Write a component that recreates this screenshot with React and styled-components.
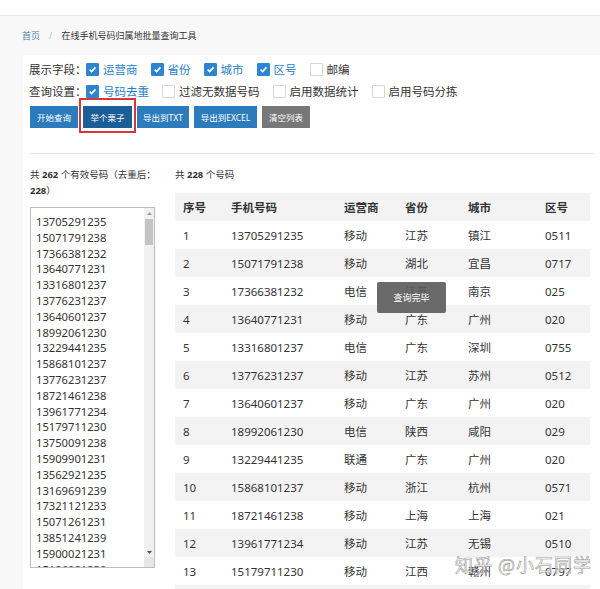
import styled, { createGlobalStyle } from "styled-components";

const GlobalStyle = createGlobalStyle`
    body {
        margin: 0;
        background: #f8f8f8;
        font-family: "Noto Sans", "Noto Sans CJK SC", sans-serif;
        color: #333;
        overflow: hidden;
    }
`;

const Page = styled.div`
    width: 600px;
    height: 589px;
    overflow: hidden;
    position: relative;
`;

const TopBar = styled.div`
    height: 15px;
    background: #fff;
    border-bottom: 1px solid #e8e8e8;
`;

const Breadcrumb = styled.div`
    display: flex;
    align-items: center;
    gap: 7px;
    padding: 9px 22px 0;
    height: 30px;
    box-sizing: border-box;
    font-size: 9px;
    line-height: 14px;
    margin-bottom: 9px;
`;

const Crumb = styled.span`
    color: ${(props) => (props.link ? "#4d7fb3" : "#333")};
`;

const Sep = styled.span`
    color: #bbb;
    margin: 0 2px;
`;

const Card = styled.div`
    margin-left: 23px;
    background: #fff;
    padding: 3px 6px 0 6px;
    height: 560px;
`;

const OptionRow = styled.div`
    display: flex;
    align-items: center;
    height: 22px;
    font-size: 11.5px;
    white-space: nowrap;
`;

const RowLabel = styled.span`
    width: 57px;
    flex-shrink: 0;
    color: #333;
`;

const Option = styled.label`
    display: flex;
    align-items: center;
    gap: 4px;
    margin-right: 13px;
    color: ${(props) => (props.checked ? "#2a7fc9" : "#333")};
`;

const Box = styled.span`
    width: 13px;
    height: 13px;
    box-sizing: border-box;
    border-radius: 1px;
    display: flex;
    align-items: center;
    justify-content: center;
    background: ${(props) => (props.checked ? "#2d85d1" : "#fff")};
    border: 1px solid ${(props) => (props.checked ? "#2d85d1" : "#d6d6d6")};
`;

const ButtonRow = styled.div`
    display: flex;
    gap: 5px;
    margin-top: 4px;
    margin-left: 1px;
`;

const Button = styled.div`
    width: ${(props) => props.w}px;
    height: 22px;
    display: flex;
    align-items: center;
    justify-content: center;
    font-size: 8.5px;
    color: #fff;
    background: ${(props) => props.bg || "#2b7bbd"};
`;

const Highlight = styled.div`
    position: relative;
    &::after {
        content: "";
        position: absolute;
        left: -4px;
        right: -4px;
        top: -8px;
        bottom: -5px;
        border: 2px solid #d3383c;
    }
`;

const Divider = styled.div`
    margin: 25px 0 0 1px;
    height: 1px;
    background: #e6e6e6;
`;

const Body = styled.div`
    display: flex;
    gap: 15px;
    padding-left: 1px;
`;

const LeftCol = styled.div`
    width: 130px;
    flex-shrink: 0;
`;

const Summary = styled.div`
    font-size: 9.5px;
    line-height: 16px;
    margin-top: 13px;
    color: #333;
    b {
        font-weight: 700;
    }
`;

const TextBox = styled.div`
    margin-top: 8px;
    width: 125px;
    height: 361px;
    border: 1px solid #bdbdbd;
    box-sizing: border-box;
    display: flex;
    overflow: hidden;
`;

const Lines = styled.div`
    flex: 1;
    padding: 6px 0 0 5px;
    font-size: 11.2px;
    line-height: 15.8px;
    color: #333;
    overflow: hidden;
`;

const ScrollBar = styled.div`
    width: 10px;
    background: #f0f0f0;
    display: flex;
    flex-direction: column;
    align-items: center;
`;

const Arrow = styled.div`
    height: 10px;
    display: flex;
    align-items: center;
    justify-content: center;
`;

const Track = styled.div`
    flex: 1;
    width: 100%;
    padding-top: 1px;
`;

const Thumb = styled.div`
    height: 26px;
    margin: 0 1px;
    background: #c3c3c3;
`;

const Grip = styled.div`
    height: 10px;
    width: 100%;
    background: #e6e6e6;
`;

const RightCol = styled.div`
    flex: 1;
    margin-right: 4px;
    position: relative;
`;

const Table = styled.table`
    margin-top: 10px;
    width: 415px;
    border-collapse: collapse;
    table-layout: fixed;
    font-size: 11.5px;
    color: #333;
`;

const Th = styled.th`
    text-align: left;
    font-weight: 700;
    height: 28px;
    padding: 0 0 0 8px;
    background: #f3f3f3;
`;

const Tr = styled.tr`
    background: ${(props) => (props.odd ? "#fff" : "#f3f3f3")};
`;

const Td = styled.td`
    height: 28px;
    padding: 0 0 0 8px;
    white-space: nowrap;
`;

const Toast = styled.div`
    position: absolute;
    left: 202px;
    top: 128px;
    width: 69px;
    height: 31px;
    background: rgba(90, 90, 90, 0.9);
    color: #fff;
    font-size: 9px;
    display: flex;
    align-items: center;
    justify-content: center;
    border-radius: 2px;
`;

const Watermark = styled.div`
    position: absolute;
    left: 455px;
    top: 551px;
    font-size: 18px;
    letter-spacing: 1px;
    color: rgba(255, 255, 255, 0.75);
    -webkit-text-stroke: 0.6px #9a9a9a;
    font-family: "Noto Sans CJK SC", sans-serif;
`;

const Check = () => (
    <svg width="9" height="9" viewBox="0 0 10 10">
        <path d="M1.8 5.2 L4 7.3 L8.3 2.6" fill="none" stroke="#fff" strokeWidth="1.8" />
    </svg>
);

const Opt = ({ checked, children }) => (
    <Option checked={checked}>
        <Box checked={checked}>{checked && <Check />}</Box>
        {children}
    </Option>
);

const numbers = [
    "13705291235", "15071791238", "17366381232", "13640771231", "13316801237",
    "13776231237", "13640601237", "18992061230", "13229441235", "15868101237",
    "13776231237", "18721461238", "13961771234", "15179711230", "13750091238",
    "15909901231", "13562921235", "13169691239", "17321121233", "15071261231",
    "13851241239", "15900021231", "15196081230",
];

const rows = [
    ["1", "13705291235", "移动", "江苏", "镇江", "0511"],
    ["2", "15071791238", "移动", "湖北", "宜昌", "0717"],
    ["3", "17366381232", "电信", "江苏", "南京", "025"],
    ["4", "13640771231", "移动", "广东", "广州", "020"],
    ["5", "13316801237", "电信", "广东", "深圳", "0755"],
    ["6", "13776231237", "移动", "江苏", "苏州", "0512"],
    ["7", "13640601237", "移动", "广东", "广州", "020"],
    ["8", "18992061230", "电信", "陕西", "咸阳", "029"],
    ["9", "13229441235", "联通", "广东", "广州", "020"],
    ["10", "15868101237", "移动", "浙江", "杭州", "0571"],
    ["11", "18721461238", "移动", "上海", "上海", "021"],
    ["12", "13961771234", "移动", "江苏", "无锡", "0510"],
    ["13", "15179711230", "移动", "江西", "赣州", "0797"],
    ["14", "13750091238", "移动", "江苏", "南京", "025"],
];

const colWidths = [48, 113, 61, 63, 77, 53];

function App() {
    return (
        <Page>
            <GlobalStyle />
            <TopBar />
            <Breadcrumb>
                <Crumb link>首页</Crumb>
                <Sep>/</Sep>
                <Crumb>在线手机号码归属地批量查询工具</Crumb>
            </Breadcrumb>
            <Card>
                <OptionRow>
                    <RowLabel>展示字段：</RowLabel>
                    <Opt checked>运营商</Opt>
                    <Opt checked>省份</Opt>
                    <Opt checked>城市</Opt>
                    <Opt checked>区号</Opt>
                    <Opt>邮编</Opt>
                </OptionRow>
                <OptionRow>
                    <RowLabel>查询设置：</RowLabel>
                    <Opt checked>号码去重</Opt>
                    <Opt>过滤无数据号码</Opt>
                    <Opt>启用数据统计</Opt>
                    <Opt>启用号码分拣</Opt>
                </OptionRow>
                <ButtonRow>
                    <Button w={48}>开始查询</Button>
                    <Highlight>
                        <Button w={49} bg="#1c5f98">举个栗子</Button>
                    </Highlight>
                    <Button w={52}>导出到TXT</Button>
                    <Button w={63}>导出到EXCEL</Button>
                    <Button w={48} bg="#787878">清空列表</Button>
                </ButtonRow>
                <Divider />
                <Body>
                    <LeftCol>
                        <Summary>
                            共 <b>262</b> 个有效号码（去重后：<b>228</b>）
                        </Summary>
                        <TextBox>
                            <Lines>
                                {numbers.map((n, i) => (
                                    <div key={i}>{n}</div>
                                ))}
                            </Lines>
                            <ScrollBar>
                                <Arrow>
                                    <svg width="5" height="3" viewBox="0 0 5 3">
                                        <path d="M0 3 L2.5 0 L5 3Z" fill="#a0a0a0" />
                                    </svg>
                                </Arrow>
                                <Track>
                                    <Thumb />
                                </Track>
                                <Arrow>
                                    <svg width="5" height="3" viewBox="0 0 5 3">
                                        <path d="M0 0 L2.5 3 L5 0Z" fill="#505050" />
                                    </svg>
                                </Arrow>
                                <Grip>
                                    <svg width="10" height="10" viewBox="0 0 10 10">
                                        <path d="M9 4 L4 9 M9 7 L7 9" stroke="#999" strokeWidth="0.8" />
                                    </svg>
                                </Grip>
                            </ScrollBar>
                        </TextBox>
                    </LeftCol>
                    <RightCol>
                        <Summary>
                            共 <b>228</b> 个号码
                        </Summary>
                        <Table>
                            <colgroup>
                                {colWidths.map((w, i) => (
                                    <col key={i} style={{ width: w }} />
                                ))}
                            </colgroup>
                            <thead>
                                <tr>
                                    {["序号", "手机号码", "运营商", "省份", "城市", "区号"].map((h) => (
                                        <Th key={h}>{h}</Th>
                                    ))}
                                </tr>
                            </thead>
                            <tbody>
                                {rows.map((r, i) => (
                                    <Tr key={i} odd={i % 2 === 0}>
                                        {r.map((c, j) => (
                                            <Td key={j}>{c}</Td>
                                        ))}
                                    </Tr>
                                ))}
                            </tbody>
                        </Table>
                        <Toast>查询完毕</Toast>
                    </RightCol>
                </Body>
            </Card>
            <Watermark>知乎 @小石同学</Watermark>
        </Page>
    );
}

export default App;
